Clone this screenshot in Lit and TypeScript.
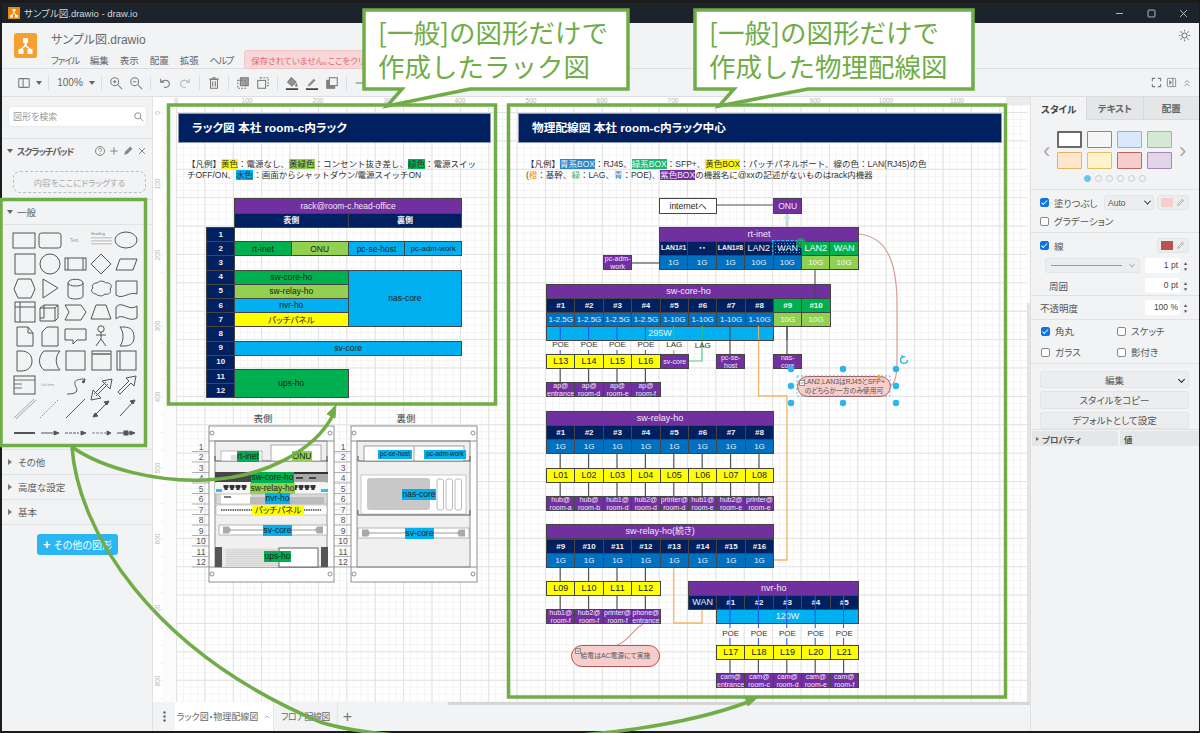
import { LitElement, css, html, svg } from 'lit';
import { customElement } from 'lit/decorators.js';

const FONT = css`"Liberation Sans", "Noto Sans CJK JP", sans-serif`;
const OX = 153;
const OY = 97;
const U = 28.4;
const H = 14.2;

const seq = (n: number) => Array.from({ length: n }, (_, i) => i);

// small icon helper: 16x16 stroke icons
const ico = (body: unknown, size = 14) => html`<svg width=${size} height=${size} viewBox="0 0 16 16" fill="none" stroke="#7a7a7a" stroke-width="1.2">${body}</svg>`;

@customElement('diagram-canvas')
export class DiagramCanvas extends LitElement {
  static styles = css`
    :host { display: block; position: relative; flex: 1; overflow: hidden; background: #fbfbfb; font-family: ${FONT}; font-feature-settings: "palt"; }
    .grid {
      position: absolute; left: 23px; top: 8px; right: 3px; bottom: 0;
      background-color: #fff;
      background-image:
        linear-gradient(#e2e2e2 1px, transparent 1px),
        linear-gradient(90deg, #e2e2e2 1px, transparent 1px),
        linear-gradient(#f3f3f3 1px, transparent 1px),
        linear-gradient(90deg, #f3f3f3 1px, transparent 1px);
      background-size: 28.4px 28.4px, 28.4px 28.4px, 7.1px 7.1px, 7.1px 7.1px;
      background-position: 0 7px, 0 0, 0 7px, 0 0;
    }
    svg.layer { position: absolute; left: 0; top: 0; }
    .cell {
      position: absolute; box-sizing: border-box; border: 1px solid #454545;
      display: flex; align-items: center; justify-content: center; text-align: center;
      font-size: 8.5px; color: #1c1c1c; overflow: hidden; white-space: pre; line-height: 1;
    }
    .navy { background: #002060; color: #f2f2f2; }
    .blue { background: #0070c0; color: #e8f2fa; font-size: 8px; }
    .sky { background: #00b0f0; }
    .sky-w { background: #00b0f0; color: #e8f7fd; font-size: 9px; }
    .purple { background: #7030a0; color: #f0e8f5; }
    .green { background: #00b050; }
    .green-w { background: #00b050; color: #f0fff5; }
    .lime { background: #92d050; }
    .lime-w { background: #92d050; color: #f5fbee; font-size: 8px; }
    .yellow { background: #ffff00; color: #222; }
    .white { background: #fff; }
    .title { background: #002060; color: #fff; font-size: 11.7px; font-weight: 700; justify-content: flex-start; padding-left: 13px; border-color: #8d97b0; }
    .small { font-size: 7px; line-height: 8px; }
    .tiny { font-size: 6.8px; font-weight: 700; }
    .big { font-size: 9px; }
    .bold { font-weight: 700; font-size: 8px; }
    .plain { border: none; background: none; color: #333; font-size: 8px; }
    .tag { border: none; font-size: 8.5px; }
    .tag-s { border: none; font-size: 6.5px; }
    .tag-b { font-size: 7.8px; }
    .note {
      border: 1px solid #b85450; background: #f8cecc; border-radius: 11px;
      font-size: 6.8px; line-height: 8.5px; color: #555;
    }
    .legend { position: absolute; font-size: 8.5px; line-height: 11px; color: #333; white-space: nowrap; font-feature-settings: normal; }
    .hy { background: #ffff00; }
    .hl { background: #92d050; }
    .hg { background: #00b050; }
    .hg2 { background: #21b573; color: #e6fff2; }
    .hs { background: #00b0f0; }
    .hb { background: #2e86c8; color: #e8f2fa; }
    .hp { background: #7030a0; color: #eee; }
    .c-o { color: #f28a20; }
    .c-g { color: #39b56a; }
    .c-b { color: #2f78c8; }
    .selected { outline: 1px dashed #29b6f2; outline-offset: 0; background-image: radial-gradient(#29b6f2 0.7px, transparent 0.8px); background-size: 3px 3px; }
  `;

  cell(x: number, y: number, w: number, h: number, t: string, c: string) {
    return html`<div class="cell ${c}" style="left:${x - OX}px;top:${y - OY}px;width:${w + 1}px;height:${h + 1}px">${t}</div>`;
  }

  row(x: number, y: number, labels: string[], c: string, w = U, h = H) {
    return labels.map((t, i) => this.cell(x + i * w, y, w, h, t, c));
  }

  rackTable() {
    const x = 234;
    const y = 227;
    return html`
      ${this.cell(x, 198, 8 * U, 15, 'rack@room-c.head-office', 'purple')}
      ${this.cell(x, 213, 4 * U, 14, '表側', 'navy bold')}
      ${this.cell(x + 4 * U, 213, 4 * U, 14, '裏側', 'navy bold')}
      ${seq(12).map((i) => this.cell(206, y + i * H, U, H, String(i + 1), 'navy bold'))}
      ${this.cell(x, y + H, 2 * U, H, 'rt-inet', 'green')}
      ${this.cell(x + 2 * U, y + H, 2 * U, H, 'ONU', 'lime')}
      ${this.cell(x + 4 * U, y + H, 2 * U, H, 'pc-se-host', 'sky')}
      ${this.cell(x + 6 * U, y + H, 2 * U, H, 'pc-adm-work', 'sky tag-b')}
      ${this.cell(x, y + 3 * H, 4 * U, H, 'sw-core-ho', 'green')}
      ${this.cell(x, y + 4 * H, 4 * U, H, 'sw-relay-ho', 'lime')}
      ${this.cell(x, y + 5 * H, 4 * U, H, 'nvr-ho', 'sky')}
      ${this.cell(x, y + 6 * H, 4 * U, H, 'パッチパネル', 'yellow')}
      ${this.cell(x + 4 * U, y + 3 * H, 4 * U, 4 * H, 'nas-core', 'sky')}
      ${this.cell(x, y + 8 * H, 8 * U, H, 'sv-core', 'sky')}
      ${this.cell(x, y + 10 * H, 4 * U, 2 * H, 'ups-ho', 'green')}
    `;
  }

  rackTags() {
    const tags: [number, number, number, number, string, string][] = [
      [237, 451, 21, 10, 'rt-inet', 'green'],
      [292, 451, 19, 10, 'ONU', 'lime'],
      [251, 472, 42, 10, 'sw-core-ho', 'green'],
      [250, 483, 44, 10, 'sw-relay-ho', 'lime'],
      [265, 493, 24, 10, 'nvr-ho', 'sky'],
      [252, 505, 51, 10, 'パッチパネル', 'yellow'],
      [263, 525, 28, 10, 'sv-core', 'sky'],
      [264, 551, 26, 10, 'ups-ho', 'green'],
      [378, 450, 33, 8, 'pc-se-host', 'sky tag-s'],
      [424, 450, 41, 8, 'pc-adm-work', 'sky tag-s'],
      [402, 489, 33, 10, 'nas-core', 'sky'],
      [405, 528, 28, 10, 'sv-core', 'sky'],
    ];
    return tags.map(([x, y, w, h, t, c]) => this.cell(x, y, w, h, t, `tag ${c}`));
  }

  network() {
    const x = 546;
    const sw = ['#1', '#2', '#3', '#4', '#5', '#6', '#7', '#8'];
    return html`
      ${this.cell(659, 198, 57, 15, 'internetへ', 'white')}
      ${this.cell(773, 198, U, 15, 'ONU', 'purple')}
      ${this.cell(659, 227, 7 * U, H, 'rt-inet', 'purple big')}
      ${this.row(659, 241, ['LAN1#1', '・・', 'LAN1#8'], 'navy tiny')}
      ${this.cell(744, 241, U, H, 'LAN2', 'navy big')}
      ${this.cell(773, 241, U, H, 'WAN', 'navy big selected')}
      ${this.row(801, 241, ['LAN2', 'WAN'], 'green-w big')}
      ${this.row(659, 255, ['1G', '1G', '1G', '10G', '10G'], 'blue')}
      ${this.row(801, 255, ['10G', '10G'], 'lime-w')}
      ${this.cell(603, 255, U, H, 'pc-adm-\nwork', 'purple small')}

      ${this.cell(x, 284, 10 * U, H, 'sw-core-ho', 'purple big')}
      ${this.row(x, 298, sw, 'navy bold')}
      ${this.row(773, 298, ['#9', '#10'], 'green-w bold')}
      ${this.row(x, 312, ['1-2.5G', '1-2.5G', '1-2.5G', '1-2.5G', '1-10G', '1-10G', '1-10G', '1-10G'], 'blue')}
      ${this.row(773, 312, ['10G', '10G'], 'lime-w')}
      ${this.cell(x, 326, 8 * U, H, '295W', 'sky-w')}
      ${['POE', 'POE', 'POE', 'POE', 'LAG'].map((t, i) => this.cell(x + i * U + 4, 339, U - 8, 11, t, 'plain'))}
      ${this.cell(x + 5 * U + 4, 340, U - 8, 11, 'LAG', 'plain')}
      ${this.row(x, 354, ['L13', 'L14', 'L15', 'L16'], 'yellow big')}
      ${this.cell(660, 354, U, H, 'sv-core', 'purple small')}
      ${this.cell(716, 354, U, H, 'pc-se-\nhost', 'purple small')}
      ${this.cell(773, 354, U, H, 'nas-\ncore', 'purple small')}
      ${this.row(x, 382, ['ap@\nentrance', 'ap@\nroom-d', 'ap@\nroom-e', 'ap@\nroom-f'], 'purple small')}

      ${this.cell(x, 411, 8 * U, H, 'sw-relay-ho', 'purple big')}
      ${this.row(x, 425, sw, 'navy bold')}
      ${this.row(x, 439, seq(8).map(() => '1G'), 'blue')}
      ${this.row(x, 468, ['L01', 'L02', 'L03', 'L04', 'L05', 'L06', 'L07', 'L08'], 'yellow big')}
      ${this.row(x, 496, ['hub@\nroom-a', 'hub@\nroom-b', 'hub1@\nroom-d', 'hub2@\nroom-d', 'printer@\nroom-d', 'hub1@\nroom-e', 'hub2@\nroom-e', 'printer@\nroom-e'], 'purple small')}

      ${this.cell(x, 524, 8 * U, H, 'sw-relay-ho(続き)', 'purple big')}
      ${this.row(x, 539, ['#9', '#10', '#11', '#12', '#13', '#14', '#15', '#16'], 'navy bold')}
      ${this.row(x, 553, seq(8).map(() => '1G'), 'blue')}
      ${this.row(x, 581, ['L09', 'L10', 'L11', 'L12'], 'yellow big')}
      ${this.row(x, 609, ['hub1@\nroom-f', 'hub2@\nroom-f', 'printer@\nroom-f', 'phone@\nentrance'], 'purple small')}

      ${this.cell(688, 581, 6 * U, H, 'nvr-ho', 'purple big')}
      ${this.cell(688, 595, U, H, 'WAN', 'navy big')}
      ${this.row(716, 595, ['#1', '#2', '#3', '#4', '#5'], 'navy bold')}
      ${this.cell(716, 609, 5 * U, H, '120W', 'sky-w')}
      ${['POE', 'POE', 'POE', 'POE', 'POE'].map((t, i) => this.cell(716 + i * U + 4, 628, U - 8, 11, t, 'plain'))}
      ${this.row(716, 645, ['L17', 'L18', 'L19', 'L20', 'L21'], 'yellow big')}
      ${this.row(716, 673, ['cam@\nentrance', 'cam@\nroom-c', 'cam@\nroom-d', 'cam@\nroom-e', 'cam@\nroom-f'], 'purple small')}

      ${this.cell(797, 376, 93, 20, 'LAN2,LAN3はRJ45とSFP+\nのどちらか一方のみ使用可', 'note')}
      ${this.cell(571, 645, 88, 21, '給電はAC電源にて実施', 'note')}
    `;
  }

  lines() {
    const x = 560.2;
    const gray = (x1: number, y1: number, x2: number, y2: number) => svg`<line x1=${x1} y1=${y1} x2=${x2} y2=${y2} stroke="#555" stroke-width="1.2"/>`;
    return svg`
      ${gray(716, 205, 773, 205)}
      ${gray(631, 263, 659, 263)}
      ${gray(730, 326, 730, 354)}
      ${gray(787, 326, 787, 354)}
      ${seq(4).map((i) => gray(x + i * U, 368, x + i * U, 382))}
      ${seq(8).flatMap((i) => [gray(x + i * U, 453, x + i * U, 468), gray(x + i * U, 482, x + i * U, 496)])}
      ${seq(4).flatMap((i) => [gray(x + i * U, 567, x + i * U, 581), gray(x + i * U, 595, x + i * U, 609)])}
      ${seq(5).map((i) => gray(730 + i * U, 659, 730 + i * U, 673))}
      <path d="M787 240V213" stroke="#f2a560" stroke-width="1.3" fill="none"/>
      <path d="M787 212l-4 7h8z" fill="#bfe3f5" opacity=".7"/><path d="M785 219h4v6h-4z" fill="#bfe3f5" opacity=".7"/>
      <path d="M758.6 340V396H787V560H773" stroke="#f7b36c" stroke-width="1.3" fill="none"/>
      <path d="M673.8 567V623H702V609" stroke="#f7b36c" stroke-width="1.3" fill="none"/>
      <path d="M702 340V361H688" stroke="#5cc88c" stroke-width="1.2" fill="none"/>
      <path d="M858 234C880 236 896 250 897 300V360C897 375 895 385 890 386" stroke="#d79b96" stroke-width="1.2" fill="none"/>
      <path d="M643 624C632 630 628 642 617 645" stroke="#d79b96" stroke-width="1.2" fill="none"/>
    `;
  }

  overLines() {
    const x = 560.2;
    const b = (px: number, y1: number, y2: number, c = '#2b50e8') => svg`<line x1=${px} y1=${y1} x2=${px} y2=${y2} stroke=${c} stroke-width="1"/>`;
    return svg`
      ${seq(4).map((i) => b(x + i * U, 326, 340))}
      ${seq(4).map((i) => b(x + i * U, 350, 354))}
      ${seq(2).map((i) => b(x + (4 + i) * U, 326, 340, '#31c27c'))}
      ${b(x + 4 * U, 350, 354, '#31c27c')}
      ${b(730, 326, 340, '#444')}
      ${b(758.6, 326, 340, '#f7b36c')}
      ${b(787, 326, 340, '#444')}
      ${b(815, 270, 298, '#444')}
      ${seq(5).flatMap((i) => [b(730 + i * U, 595, 628), b(730 + i * U, 638, 645)])}
    `;
  }

  selection() {
    const pts = [[791, 369], [843, 369], [896, 369], [791, 386], [896, 386], [791, 403], [843, 403], [896, 403]];
    return svg`
      <rect x="797" y="376" width="93" height="20" fill="none" stroke="#29b6f2" stroke-dasharray="2 2" stroke-width=".8"/>
      <path d="M799.500 380.500h5v5h-5zM800.500 383h3" fill="#fff" stroke="#666" stroke-width=".7"/>
      <path d="M575.500 648.500h5v5h-5zM576.500 651h3" fill="#ddd" stroke="#666" stroke-width=".7"/>
      ${pts.map(([a, b]) => svg`<circle cx=${a} cy=${b} r="3.2" fill="#29b6f2"/>`)}
      <path d="M879 374.500l2.500 2.500-2.500 2.500-2.500-2.500z" fill="#f5a030"/>
      <circle cx="904" cy="360" r="3.400" fill="none" stroke="#29b6f2" stroke-width="1.400" stroke-dasharray="17 5"/>
      <path d="M901 355l3 1-1.500 2.400z" fill="#29b6f2"/>
      <circle cx="801" cy="243" r="5" fill="#1faa4d" opacity=".75"/>
    `;
  }

  rack(x: number, w: number) {
    const corner = [[x + 3, 433], [x + w - 4, 433], [x + 3, 574], [x + w - 4, 574]];
    return svg`
      <rect x=${x} y="426" width=${w} height="156" fill="#fff" stroke="#8e8e8e"/>
      <rect x=${x + 6} y="441" width=${w - 13} height="126" fill="#f0f0f0" stroke="#8e8e8e"/>
      <line x1=${x} y1="441" x2=${x + w} y2="441" stroke="#8e8e8e"/>
      <line x1=${x} y1="567" x2=${x + w} y2="567" stroke="#8e8e8e"/>
      ${corner.map(([a, b]) => svg`<circle cx=${a} cy=${b} r="2" fill="#fff" stroke="#8e8e8e"/>`)}
      ${seq(12).map((i) => svg`
        <line x1=${x - 17} y1=${451.5 + i * 10.5} x2=${x} y2=${451.5 + i * 10.5} stroke="#8e8e8e" stroke-width=".7"/>
        <text x=${x - 8} y=${449.5 + i * 10.5} font-size="8.5" fill="#555" text-anchor="middle">${i + 1}</text>
      `)}
    `;
  }

  server(x: number, y: number, w: number) {
    return svg`
      <rect x=${x} y=${y} width=${w} height="10" fill="#fff" stroke="#999" stroke-width=".7"/>
      <path d="M${x + 6} ${y + 5}h${w - 12}" stroke="#ccc" stroke-width="2"/>
      <path d="M${x + 4} ${y + 1.5}h6l2 3.5-2 3.5h-6z" fill="#aaa"/>
      <path d="M${x + w - 4} ${y + 1.5}h-6l-2 3.5 2 3.5h6z" fill="#aaa"/>
    `;
  }

  racks() {
    const ports = [226, 232, 238, 244, 295, 301, 307, 313];
    return svg`
      ${this.rack(209, 125)}
      ${this.rack(351, 126)}
      <text x="263" y="422" font-size="9.5" fill="#444" text-anchor="middle">表側</text>
      <text x="406" y="422" font-size="9.5" fill="#444" text-anchor="middle">裏側</text>

      <path d="M215 461H328" stroke="#555" stroke-width="1"/>
      <path d="M215 456V461M327 456V461" stroke="#555"/>
      <rect x="221" y="451" width="41" height="10" fill="#fff" stroke="#aaa" stroke-width=".8"/>
      <rect x="231" y="455" width="12" height="6" fill="#ddd"/>
      <rect x="271" y="445" width="50" height="16" fill="#fff" stroke="#999" stroke-width=".8"/>
      <rect x="215" y="472" width="113" height="10" fill="#a8a8a8"/>
      <rect x="215" y="472" width="36" height="10" fill="#454545"/>
      <path d="M251 472h77v2h-77z" fill="#333"/>
      <path d="M296 478h7M309 478h7" stroke="#222" stroke-width="1.6"/>
      <rect x="215" y="483" width="113" height="10" fill="#f6f6f6"/>
      ${ports.map((p) => svg`<path d="M${p - 2.5} 485h5v2.5l-1 1v1.500h-3v-1.500l-1-1z" fill="#333"/>`)}
      <rect x="216" y="489" width="6" height="3" fill="#2dbdf0"/>
      <rect x="321" y="489" width="7" height="3" fill="#2dbdf0"/>
      <rect x="216" y="494" width="111" height="10" fill="#d8d8d8" stroke="#aaa" stroke-width=".6"/>
      <rect x="221" y="494.500" width="30" height="9" fill="#fff"/>
      <rect x="250" y="497" width="74" height="7" fill="#bbb"/>
      <path d="M224 497h7" stroke="#444" stroke-width="1.4"/>
      <rect x="216" y="505" width="111" height="10" rx="2" fill="#fff" stroke="#aaa" stroke-width=".6"/>
      <path d="M221 510h100" stroke="#444" stroke-width="1.6" stroke-dasharray="1.500 .8"/>
      ${this.server(219, 525, 108)}
      <rect x="215" y="547" width="7" height="20" fill="#565656"/>
      <rect x="321" y="547" width="7" height="20" fill="#565656"/>
      <rect x="222" y="548" width="58" height="19" fill="#e9e9e9"/>
      ${seq(8).map((i) => svg`<line x1="226" y1=${550 + i * 2.2} x2="279" y2=${550 + i * 2.2} stroke="#c4c4c4" stroke-width=".8"/>`)}
      <rect x="279" y="548" width="39" height="19" fill="#fff" stroke="#555" stroke-width=".9"/>

      <path d="M358 461H470M358 456V461M470 456V461" stroke="#555" fill="none"/>
      <rect x="364" y="446" width="100" height="15" fill="#fff" stroke="#888" stroke-width=".8"/>
      <line x1="414" y1="446" x2="414" y2="461" stroke="#888" stroke-width=".8"/>
      <rect x="361" y="475" width="105" height="39" fill="#fff" stroke="#bbb" stroke-width=".8"/>
      <rect x="367" y="478" width="63" height="32" rx="3" fill="#c8c8c8"/>
      ${[437, 446, 455].map((p) => svg`<rect x=${p} y="479" width="6.500" height="31" rx="2" fill="#fff" stroke="#aaa" stroke-width=".8"/>`)}
      <path d="M358 515H470M358 510V515M470 510V515" stroke="#555" fill="none"/>
      ${this.server(358, 528, 111)}
    `;
  }

  ruler() {
    return svg`
      <rect x="153" y="97" width="877" height="8" fill="#fff"/>
      <rect x="1006" y="97" width="24" height="8" fill="#ebebeb"/>
      <rect x="153" y="97" width="10" height="605" fill="#fff"/>
      ${seq(12).map((i) => svg`<text x=${176 + i * 71} y="103" font-size="6.500" fill="#b5b5b5" text-anchor="middle">${i * 100}</text>`)}
      ${seq(47).map((i) => svg`<line x1=${176 + i * 17.75} y1="103" x2=${176 + i * 17.75} y2="105" stroke="#ddd" stroke-width=".7"/>`)}
      ${seq(9).map((i) => svg`<text transform="translate(160 ${113 + i * 71}) rotate(-90)" font-size="6.500" fill="#b5b5b5" text-anchor="middle">${i * 100}</text>`)}
      ${seq(34).map((i) => svg`<line x1="161" y1=${113 + i * 17.75} x2="163" y2=${113 + i * 17.75} stroke="#ddd" stroke-width=".7"/>`)}
    `;
  }

  render() {
    const view = `${OX} ${OY} 877 605`;
    return html`
      <div class="grid"></div>
      <svg class="layer" width="877" height="605" viewBox=${view} font-family="Liberation Sans, Noto Sans CJK JP, sans-serif">
        ${this.ruler()}
        ${this.racks()}
        ${this.lines()}
      </svg>
      ${this.cell(178, 113, 312, 29, 'ラック図 本社 room-c内ラック', 'title')}
      ${this.cell(518, 113, 483, 29, '物理配線図 本社 room-c内ラック中心', 'title')}
      <div class="legend" style="left:${187 - OX}px;top:${159 - OY}px">
        【凡例】<span class="hy">黄色</span>：電源なし、<span class="hl">黄緑色</span>：コンセント抜き差し、<span class="hg">緑色</span>：電源スイッ<br>チOFF/ON、<span class="hs">水色</span>：画面からシャットダウン/電源スイッチON
      </div>
      <div class="legend" style="left:${526 - OX}px;top:${159 - OY}px">
        【凡例】<span class="hb">青系BOX</span>：RJ45、<span class="hg2">緑系BOX</span>：SFP+、<span class="hy">黄色BOX</span>：パッチパネルポート、線の色：LAN(RJ45)の色<br>(<span class="c-o">橙</span>：基幹、<span class="c-g">緑</span>：LAG、<span class="c-b">青</span>：POE)、<span class="hp">紫色BOX</span>の機器名に@xxの記述がないものはrack内機器
      </div>
      ${this.rackTable()}
      ${this.rackTags()}
      ${this.network()}
      <svg class="layer" width="877" height="605" viewBox=${view}>
        ${this.overLines()}
        ${this.selection()}
      </svg>
    `;
  }
}

@customElement('shape-palette')
export class ShapePalette extends LitElement {
  static styles = css`
    :host { display: block; width: 151px; height: 100%; flex: none; box-sizing: border-box; background: #f1f3f4; border-right: 1px solid #dfe1e2; font-family: ${FONT}; font-feature-settings: "palt"; color: #5f5f5f; }
    .search { height: 41px; padding: 10px 6px 0 7px; box-sizing: border-box; }
    .search div { height: 19px; background: #fff; border-radius: 3px; box-shadow: 0 0 2px #d5d5d5; display: flex; align-items: center; justify-content: space-between; padding: 0 2px 0 4px; font-size: 9px; color: #9a9a9a; }
    .sec { height: 25px; box-sizing: border-box; border-top: 1px solid #e0e2e3; display: flex; align-items: center; padding-left: 5px; font-size: 9.5px; font-weight: 400; gap: 4px; }
    .pad { font-weight: 700; font-size: 9px; letter-spacing: -1.1px; }
    .tools { margin-left: auto; padding-right: 4px; display: flex; gap: 2px; align-items: center; }
    .arrow { width: 0; height: 0; border-left: 3.500px solid transparent; border-right: 3.500px solid transparent; border-top: 4px solid #666; }
    .side { width: 0; height: 0; border-top: 3px solid transparent; border-bottom: 3px solid transparent; border-left: 4px solid #777; margin: 0 2px 0 1px; }
    .drop { margin: 8px 6px 6px 11px; height: 22px; box-sizing: border-box; border: 1px dashed #bcbcbc; border-radius: 7px; display: flex; align-items: center; justify-content: center; font-size: 8.5px; color: #a8a8a8; }
    .shapes { height: 225px; border-top: 1px solid #e0e2e3; box-sizing: border-box; }
    .shapes svg { display: block; margin-top: -1px; }
    .more { margin: 9px 0 0 35px; width: 81px; height: 21px; border-radius: 3px; background: #29b6f2; color: #fff; display: flex; align-items: center; justify-content: center; font-size: 10px; gap: 3px; }
    .more b { font-size: 13px; font-weight: 700; line-height: 1; }
  `;

  shapes() {
    return svg`
      <g fill="none" stroke="#555" stroke-width="1">
        <rect x="11" y="233" width="22" height="15"/>
        <rect x="37" y="233" width="22" height="15" rx="2.500"/>
        <ellipse cx="124" cy="240" rx="11" ry="8"/>
        <rect x="13" y="254" width="20" height="20"/>
        <circle cx="48" cy="264" r="10"/>
        <rect x="63" y="258" width="21" height="12"/><path d="M66 258v12M81 258v12"/>
        <path d="M99 254l10 10-10 10-10-10z"/>
        <path d="M118 259h17l-4 11h-17z"/>
        <path d="M16 279h13l4 10-4 9h-13l-4-9z"/>
        <path d="M41 279l15 9-15 10z"/>
        <path d="M66 283c0-5 15-5 15 0v13c0 4-15 4-15 0zM66 283c0 4 15 4 15 0"/>
        <path d="M95 283c3-3 7-2 9 0 4-1 7 3 4 6 2 4-2 6-5 5-3 3-7 2-9 0-4 0-6-4-3-6-2-3 1-5 4-5z"/>
        <path d="M114 281h21v13c-8-3-14 6-21 1z"/>
        <rect x="13" y="302" width="20" height="20"/><path d="M18 302v20M13 307h20"/>
        <path d="M38 308l4-3h14v13l-3 3h-15zM38 308h15v13M53 308l3-3"/><path d="M42 305v13h-4"/>
        <path d="M63 305h16l5 7-5 8h-16l4-8z"/>
        <path d="M94 305h10l5 14h-20z"/>
        <path d="M114 307c6-7 13 5 21-1v12c-8 5-15-6-21 1z"/>
        <path d="M15 327h11l5 6v13h-16zM26 327v6h5"/>
        <path d="M45 327h11v19h-16v-14z"/>
        <path d="M63 329h21v11h-9l-4 4v-4h-8z"/>
        <circle cx="99" cy="329" r="3.200"/><path d="M99 332v7l-5 7M99 339l5 7M94 335h10"/>
        <path d="M118 327h4c7 0 10 4 10 10s-3 9-10 9h-4c4-5 4-14 0-19z"/>
        <path d="M15 351h4c7 0 11 4 11 10s-4 10-11 10h-4z"/>
        <path d="M42 351h16c-5 5-5 14 0 19h-16c-6-4-6-14 0-19z"/>
        <rect x="64" y="351" width="19" height="19"/>
        <rect x="90" y="351" width="19" height="19"/><path d="M90 354h19" stroke-width="2" stroke="#888"/>
        <rect x="115" y="351" width="19" height="19"/><path d="M118 351v19"/>
        <rect x="12" y="376" width="21" height="18"/><path d="M12 380h21M12 384h8M12 388h8" stroke-width=".8"/>
        <path d="M65 394c10 0 11-3 9-7s-3-8 9-8"/>
        <path d="M92 394l12-12M94 396l12-12M91 390l-2 10 10-2zM110 379l-2 10-8-8z"/>
        <path d="M116 392l11-11-3-3 10-2-2 10-3-3-11 11z"/>
      </g>
      <g stroke="#555" fill="#555" stroke-width="1">
        <path d="M80 382l3-3-1 4z"/>
        <path d="M12 418l20-19M14 419l20-19" stroke-width=".5" fill="none"/>
        <path d="M38 418l19-19" stroke-dasharray="1.500 1.500" stroke-width=".7" fill="none"/>
        <path d="M64 418l19-19" fill="none"/>
        <path d="M92 416l14-14" fill="none"/><path d="M107 401l-5 1 3 3zM91 417l5-1-3-3z"/>
        <path d="M118 416l13-14" fill="none"/><path d="M133 400l-5 1 3 3z"/>
        <path d="M12 433h21" stroke-width="2"/>
        <path d="M39 433h12" fill="none"/><path d="M57 433l-5-2v4z"/>
        <path d="M63 433h14" stroke-dasharray="3 1" fill="none"/><path d="M84 433l-5-2v4z"/>
        <path d="M90 433h14" stroke-dasharray="3 1" stroke-width=".7" fill="none"/><path d="M109 433l-4-2v4z"/>
        <path d="M115 433h14" fill="none"/><rect x="122" y="431" width="4" height="4"/><path d="M133 433l-5-2v4z"/>
      </g>
      <g font-size="5" fill="#999" font-family="Liberation Sans, sans-serif">
        <text x="68" y="242" font-size="4.500">Text</text>
        <text x="89" y="235" font-size="3.500" font-weight="700">Heading</text>
        <path d="M89 237h21v1.500h-21zM89 240h21v1.500h-21zM89 243h21v1.500h-21z" fill="#ccc"/>
        <text x="39" y="386" font-size="3.500">List Item</text>
      </g>
    `;
  }

  render() {
    return html`
      <div class="search"><div>図形を検索 ${ico(svg`<circle cx="7" cy="7" r="4.500"/><path d="M10.500 10.500L15 15" />`, 11)}</div></div>
      <div class="sec"><span class="arrow"></span><span class="pad">スクラッチパッド</span>
        <span class="tools">
          ${ico(svg`<circle cx="8" cy="8" r="6" stroke-width="1.200"/><path d="M6 6.500c0-3 4-3 4 0 0 1.500-2 1.500-2 3M8 11v1.500" stroke-width="1.200"/>`, 12)}
          ${ico(svg`<path d="M8 3v10M3 8h10"/>`, 12)}
          ${ico(svg`<path d="M3 13l1-4 7-7 3 3-7 7z" fill="#888" stroke="none"/>`, 12)}
          ${ico(svg`<path d="M4 4l8 8M12 4l-8 8"/>`, 12)}
        </span>
      </div>
      <div class="drop">内容をここにドラッグする</div>
      <div class="sec"><span class="arrow"></span>一般</div>
      <div class="shapes"><svg width="150" height="225" viewBox="0 224 150 225">${this.shapes()}</svg></div>
      <div class="sec"><span class="side"></span>その他</div>
      <div class="sec"><span class="side"></span>高度な設定</div>
      <div class="sec"><span class="side"></span>基本</div>
      <div class="sec" style="height:0"></div>
      <div class="more"><b>+</b>その他の図形</div>
    `;
  }
}

@customElement('format-panel')
export class FormatPanel extends LitElement {
  static styles = css`
    :host { display: block; width: 169px; flex: none; background: #f1f3f4; border-left: 1px solid #dfe1e2; font-family: ${FONT}; font-feature-settings: "palt"; font-size: 9.5px; color: #555; box-sizing: border-box; overflow: hidden; white-space: nowrap; }
    .tabs { display: flex; height: 23px; }
    .tabs div { flex: 1; display: flex; align-items: center; justify-content: center; background: #e4e6e7; border-left: 1px solid #d8dadb; border-bottom: 1px solid #d8dadb; font-weight: 700; color: #666; }
    .tabs .on { background: #f1f3f4; border: none; color: #444; }
    .sec { box-sizing: border-box; border-bottom: 1px solid #e0e2e3; padding: 0 10px 0 9px; }
    .swatches { height: 70px; position: relative; padding-top: 11px; }
    .sw-grid { display: grid; grid-template-columns: repeat(4, 25px); grid-auto-rows: 17px; gap: 4px 5px; justify-content: center; }
    .sw-grid i { border: 1px solid; border-radius: 1px; }
    .chev { position: absolute; top: 18px; color: #aaa; font-size: 22px; line-height: 26px; }
    .dots { display: flex; gap: 4px; justify-content: center; margin-top: 6px; }
    .dots i { width: 5px; height: 5px; border: 1px solid #c9c9c9; border-radius: 50%; }
    .dots i:first-child { background: #66c4ee; border-color: #66c4ee; }
    .line { display: flex; align-items: center; gap: 5px; }
    .cb { width: 9px; height: 9px; box-sizing: border-box; flex: none; background: #fff; border: 1px solid #888; border-radius: 2px; display: inline-block; }
    .cb.on { background: #0f73e6; border-color: #0f73e6; position: relative; }
    .cb.on::after { content: ""; position: absolute; left: 2px; top: 0; width: 2px; height: 4.500px; border: solid #fff; border-width: 0 1.300px 1.300px 0; transform: rotate(45deg); }
    .ctl { background: #ebedee; border: 1px solid #e2e4e5; border-radius: 3px; height: 15px; box-sizing: border-box; display: flex; align-items: center; }
    .color { width: 32px; margin-left: auto; padding: 0 3px; gap: 3px; }
    .color i { width: 16px; height: 9px; }
    .color svg { flex: none; }
    .sel { width: 50px; margin-left: auto; justify-content: space-between; padding: 0 3px; font-size: 8.5px; }
    .sel + .color { margin-left: -2px; }
    .caret { width: 4px; height: 4px; border: solid #222; border-width: 0 1.300px 1.300px 0; transform: rotate(45deg) translate(-1px, -1px); }
    .num { width: 35px; height: 15px; box-sizing: border-box; background: #fff; border-radius: 3px; text-align: right; padding-right: 2px; line-height: 15px; font-size: 8.500px; color: #444; }
    .spin { width: 7px; margin-left: 2px; color: #555; font-size: 5px; line-height: 6px; text-align: center; }
    .stacked { height: 43px; padding-top: 5px; }
    .grow { margin-left: auto; display: flex; align-items: center; }
    .optgrid { height: 44px; display: grid; grid-template-columns: 76px 1fr; align-content: center; row-gap: 7px; padding-left: 10px; }
    .btns { height: 66px; padding-top: 7px; display: flex; flex-direction: column; gap: 3px; }
    .btn { height: 16px; background: #ebedee; border: 1px solid #e2e4e5; border-radius: 3px; display: flex; align-items: center; justify-content: center; position: relative; }
    .btn .caret { position: absolute; right: 4px; top: 5px; transform: rotate(45deg); }
    .props { display: flex; gap: 2px; height: 15px; margin: 1px 0 0 1px; font-size: 8.500px; font-weight: 700; }
    .props div { background: #e4e6e7; display: flex; align-items: center; padding-left: 4px; }
    .props div:first-child { width: 86px; box-sizing: border-box; gap: 3px; }
    .props div:last-child { flex: 1; }
    .tri { width: 0; height: 0; border-top: 2.500px solid transparent; border-bottom: 2.500px solid transparent; border-left: 3px solid #666; }
    .dropsel { width: 95px; height: 15px; margin-left: 5px; justify-content: space-between; padding: 0 5px; }
    .dropsel i { width: 71px; height: 1px; background: #999; }
    .dropsel .caret { border-color: #aaa; width: 3px; height: 3px; }
  `;

  spin() {
    return html`<div class="spin">▲<br>▼</div>`;
  }

  colorBtn(c: string) {
    return html`<div class="ctl color"><i style="background:${c}"></i>${ico(svg`<path d="M3 13l1-3 6-6 2 2-6 6zM10 3l1-1 3 3-1 1" stroke-width="1.300" stroke="#999"/>`, 9)}</div>`;
  }

  render() {
    const swatches = [
      ['#fff', '#6a6a6a'], ['#f5f5f5', '#8a8a8a'], ['#dae8fc', '#90b0d8'], ['#d5e8d4', '#92c28a'],
      ['#ffe6cc', '#e2b35a'], ['#fff2cc', '#ddc25e'], ['#f8cecc', '#c0645f'], ['#e1d5e7', '#a887b8'],
    ];
    return html`
      <div class="tabs"><div class="on">スタイル</div><div>テキスト</div><div>配置</div></div>
      <div class="sec swatches">
        <span class="chev" style="left:12px">‹</span><span class="chev" style="left:148px">›</span>
        <div class="sw-grid">${swatches.map(([f, b], i) => html`<i style="background:${f};border-color:${b};border-width:${i === 0 ? 2 : 1}px"></i>`)}</div>
        <div class="dots">${seq(6).map(() => html`<i></i>`)}</div>
      </div>
      <div class="sec stacked">
        <div class="line"><span class="cb on"></span>塗りつぶし
          <div class="ctl sel">Auto <span class="caret"></span></div>
          ${this.colorBtn('#f8cecc')}
        </div>
        <div class="line" style="margin-top:4px"><span class="cb"></span>グラデーション</div>
      </div>
      <div class="sec" style="height:63px;padding-top:5px">
        <div class="line"><span class="cb on"></span>線${this.colorBtn('#b85450')}</div>
        <div class="line" style="margin-top:5px"><div class="ctl dropsel"><i></i><span class="caret"></span></div><div class="grow"><div class="num">1 pt</div>${this.spin()}</div></div>
        <div class="line" style="margin-top:5px"><span style="margin-left:9px">周囲</span><div class="grow"><div class="num">0 pt</div>${this.spin()}</div></div>
      </div>
      <div class="sec line" style="height:24px">不透明度<div class="grow"><div class="num">100 %</div>${this.spin()}</div></div>
      <div class="sec optgrid">
        <div class="line"><span class="cb on"></span>角丸</div><div class="line"><span class="cb"></span>スケッチ</div>
        <div class="line"><span class="cb"></span>ガラス</div><div class="line"><span class="cb"></span>影付き</div>
      </div>
      <div class="sec btns">
        <div class="btn">編集<span class="caret"></span></div>
        <div class="btn">スタイルをコピー</div>
        <div class="btn">デフォルトとして設定</div>
      </div>
      <div class="props"><div><span class="tri"></span>プロパティ</div><div>値</div></div>
    `;
  }
}

@customElement('app-root')
export class AppRoot extends LitElement {
  static styles = css`
    :host { display: block; position: relative; width: 1200px; height: 733px; overflow: hidden; font-family: ${FONT}; font-feature-settings: "palt"; }
    .win { box-sizing: border-box; height: 733px; border: solid #1b1b1b; border-width: 3px 1px 2px 2px; display: flex; flex-direction: column; background: #f1f3f4; }
    .titlebar { height: 20px; flex: none; background: #1c232b; color: #d4d6d8; display: flex; align-items: center; font-size: 9.500px; padding-left: 6px; gap: 4px; }
    .winbtns { margin-left: auto; display: flex; gap: 0; align-items: center; }
    .winbtns span { width: 32px; display: flex; justify-content: center; }
    .head { height: 46px; flex: none; display: flex; padding: 10px 0 0 12px; box-sizing: border-box; gap: 14px; position: relative; border-bottom: 1px solid #dcdee0; }
    .name { font-size: 12px; color: #6a6a6a; line-height: 15px; }
    .menu { display: flex; gap: 11px; margin-top: 2px; font-size: 9.500px; color: #666; align-items: center; }
    .menu .k { letter-spacing: -1.300px; }
    .notice { background: #f8d7da; border: 1px solid #f1c5c8; border-radius: 3px; color: #d8686f; font-size: 8.500px; padding: 0 6px; height: 17px; display: flex; align-items: center; white-space: nowrap; width: 170px; overflow: hidden; }
    .sun { position: absolute; right: 8px; top: 5px; }
    .toolbar { height: 28px; flex: none; box-sizing: border-box; border-bottom: 1px solid #dcdee0; display: flex; align-items: center; padding-left: 12px; color: #666; font-size: 10px; }
    .ib { width: 20px; height: 20px; display: flex; align-items: center; justify-content: center; flex: none; }
    .ib.dim svg { opacity: .45; }
    .sep { width: 1px; height: 14px; background: #dcdee0; margin: 0 4px; flex: none; }
    .caret { width: 0; height: 0; border-left: 3.500px solid transparent; border-right: 3.500px solid transparent; border-top: 4px solid #666; }
    .carbox { width: 10px; display: flex; justify-content: center; flex: none; }
    .zoom { width: 34px; text-align: center; flex: none; }
    .tr { margin-left: auto; display: flex; padding-right: 5px; }
    .tr .ib { width: 15px; }
    .main { flex: 1; display: flex; min-height: 0; }
    .center { flex: 1; display: flex; flex-direction: column; min-width: 0; position: relative; }
    .tabs { height: 29px; flex: none; display: flex; align-items: center; font-size: 9px; color: #666; position: relative; background: #f1f3f4; }
    .dots { width: 22px; display: flex; justify-content: center; }
    .tab { height: 100%; background: #fff; width: 99px; box-sizing: border-box; display: flex; align-items: center; justify-content: center; gap: 5px; border-right: 1px solid #e2e4e5; }
    .tab2 { padding: 0 7px; height: 100%; display: flex; align-items: center; border-right: 1px solid #e2e4e5; letter-spacing: -.5px; }
    .plus { padding-left: 5px; font-size: 16px; color: #777; font-weight: 300; }
    .hscroll { position: absolute; left: 295px; right: 0; top: 0; height: 3px; background: #d4d6d8; }
    .vscroll { position: absolute; right: 0; top: 206px; bottom: 29px; width: 3px; background: #e1e3e4; }
    svg.overlay { position: absolute; left: 0; top: 0; pointer-events: none; font-feature-settings: normal; }
  `;

  render() {
    const g = '#70ad47';
    return html`
      <div class="win">
        <div class="titlebar">
          <svg width="12" height="12" viewBox="0 0 24 24"><rect width="24" height="24" fill="#f08705"/><path d="M9 4h6v5h-2v3l5 4h2v5h-6v-5h1l-3-3-3 3h1v5H4v-5h2l5-4V9H9z" fill="#fff"/></svg>
          <span>サンプル図.drawio - draw.io</span>
          <div class="winbtns">
            <span>${ico(svg`<path d="M3 8h10" stroke="#d4d6d8"/>`, 11)}</span>
            <span>${ico(svg`<rect x="3" y="3" width="10" height="10" rx="1" stroke="#d4d6d8"/>`, 11)}</span>
            <span>${ico(svg`<path d="M3 3l10 10M13 3L3 13" stroke="#d4d6d8"/>`, 11)}</span>
          </div>
        </div>
        <div class="head">
          <svg width="23" height="25" viewBox="0 0 23 25"><rect width="23" height="25" rx="2.500" fill="#f5a030"/><path d="M9 5h5v5h-1.500v2.500L17 16h1.500v5h-5v-5h1l-3-2.500-3 2.500h1v5h-5v-5H6l4.500-3.500V10H9z" fill="#fff"/></svg>
          <div>
            <div class="name">サンプル図.drawio</div>
            <div class="menu">
              <span class="k">ファイル</span><span>編集</span><span>表示</span><span>配置</span><span>拡張</span><span class="k">ヘルプ</span>
              <div class="notice">保存されていません。ここをクリックして保存してください。</div>
            </div>
          </div>
          <div class="sun">${ico(svg`<circle cx="8" cy="8" r="3" stroke-width="1.300"/><path d="M8 1v2M8 13v2M1 8h2M13 8h2M3 3l1.500 1.500M11.500 11.500L13 13M13 3l-1.500 1.500M4.500 11.500L3 13" stroke-width="1.300"/>`, 13)}</div>
        </div>
        <div class="toolbar">
          <div class="ib">${ico(svg`<rect x="2" y="3" width="12" height="10" rx="1"/><path d="M7 3v10"/>`)}</div>
          <div class="carbox"><span class="caret"></span></div>
          <div class="sep"></div>
          <div class="zoom">100%</div>
          <div class="carbox"><span class="caret"></span></div>
          <div class="sep"></div>
          <div class="ib">${ico(svg`<circle cx="6.500" cy="6.500" r="4.500"/><path d="M10 10l5 5M4.500 6.500h4M6.500 4.500v4"/>`)}</div>
          <div class="ib">${ico(svg`<circle cx="6.500" cy="6.500" r="4.500"/><path d="M10 10l5 5M4.500 6.500h4"/>`)}</div>
          <div class="sep"></div>
          <div class="ib">${ico(svg`<path d="M3 3v4h4M3.500 7C6 4 13 4 13 9c0 3-3 4-6 4"/>`)}</div>
          <div class="ib dim">${ico(svg`<path d="M13 3v4H9M12.500 7C10 4 3 4 3 9c0 3 3 4 6 4"/>`)}</div>
          <div class="sep"></div>
          <div class="ib">${ico(svg`<path d="M4 4h8v10H4zM2.500 3.500h11M6 2h4M6.500 6v6M9.500 6v6"/>`)}</div>
          <div class="sep"></div>
          <div class="ib">${ico(svg`<rect x="5" y="2" width="9" height="9" fill="#a0a0a0"/><rect x="2" y="5" width="9" height="9" stroke-dasharray="2 1.500"/>`)}</div>
          <div class="ib">${ico(svg`<rect x="5" y="2" width="9" height="9" stroke-dasharray="2 1.500"/><rect x="2" y="5" width="9" height="9" fill="#f1f3f4"/>`)}</div>
          <div class="sep"></div>
          <div class="ib">${ico(svg`<path d="M7 2l5 5-4 4-5-4z" fill="#909090" stroke="none"/><path d="M7 2l5.500 5-4.500 4.500L3 7zM13 9c1 1.500 1 3 0 3s-1-1.500 0-3z"/><path d="M1 15h14" stroke-width="2" stroke="#444"/>`)}</div>
          <div class="ib">${ico(svg`<path d="M3 12l1-3 6-6 2 2-6 6z" fill="#909090" stroke="none"/><path d="M1 15h14" stroke-width="2" stroke="#444"/>`)}</div>
          <div class="ib">${ico(svg`<rect x="2" y="5" width="9" height="9" fill="#808080"/><rect x="5" y="2" width="9" height="9" fill="#f1f3f4"/>`)}</div>
          <div class="sep"></div>
          <div class="ib">${ico(svg`<path d="M2 8h12"/>`)}</div>
          <div class="tr">
            <div class="ib">${ico(svg`<path d="M2 6V2h4M10 2h4v4M14 10v4h-4M6 14H2v-4" stroke-width="1.500"/>`, 11)}</div>
            <div class="ib">${ico(svg`<rect x="2" y="2" width="12" height="12" rx="1"/><path d="M10 2v12M5 5l3 3-3 3" fill="#7a7a7a"/>`, 11)}</div>
            <div class="ib">${ico(svg`<path d="M4 8l4-4 4 4M4 13l4-4 4 4"/>`, 10)}</div>
          </div>
        </div>
        <div class="main">
          <shape-palette></shape-palette>
          <div class="center">
            <diagram-canvas></diagram-canvas>
            <div class="vscroll"></div>
            <div class="tabs">
              <div class="hscroll"></div>
              <div class="dots">${ico(svg`<circle cx="8" cy="3" r="1.500" fill="#666" stroke="none"/><circle cx="8" cy="8" r="1.500" fill="#666" stroke="none"/><circle cx="8" cy="13" r="1.500" fill="#666" stroke="none"/>`, 13)}</div>
              <div class="tab">ラック図・物理配線図 ${ico(svg`<path d="M4 10l4-4 4 4"/>`, 8)}</div>
              <div class="tab2">フロア配線図</div>
              <div class="plus">+</div>
            </div>
          </div>
          <format-panel></format-panel>
        </div>
      </div>
      <svg class="overlay" width="1200" height="733" viewBox="0 0 1200 733" font-family="Noto Sans CJK JP, sans-serif">
        <g fill="none" stroke=${g} stroke-width="3.500">
          <rect x="1" y="199.500" width="144.500" height="246"/>
          <rect x="168.500" y="105" width="327" height="299"/>
          <rect x="508.500" y="105" width="497" height="592"/>
          <path d="M72 447C105 470 160 482 205 480C265 478 315 450 333 415"/>
          <path d="M72 447C78 530 150 650 320 722C390 745 620 750 748 702"/>
        </g>
        <path d="M336 405l-9 9 8 4z" fill=${g} stroke=${g} stroke-width="1"/>
        <path d="M757 698l-12-1 3 9z" fill=${g} stroke=${g} stroke-width="1"/>
        <g stroke=${g} stroke-width="3.500" fill="#fff">
          <path d="M364 10H628V89H470L387 106L402 89H364Z"/>
          <path d="M695 10H973V89H808L719 106L734 89H695Z"/>
        </g>
        <g fill=${g} font-size="26.500">
          <text x="378" y="43">[一般]の図形だけで</text>
          <text x="378" y="77">作成したラック図</text>
          <text x="709" y="43">[一般]の図形だけで</text>
          <text x="709" y="77">作成した物理配線図</text>
        </g>
      </svg>
    `;
  }
}
